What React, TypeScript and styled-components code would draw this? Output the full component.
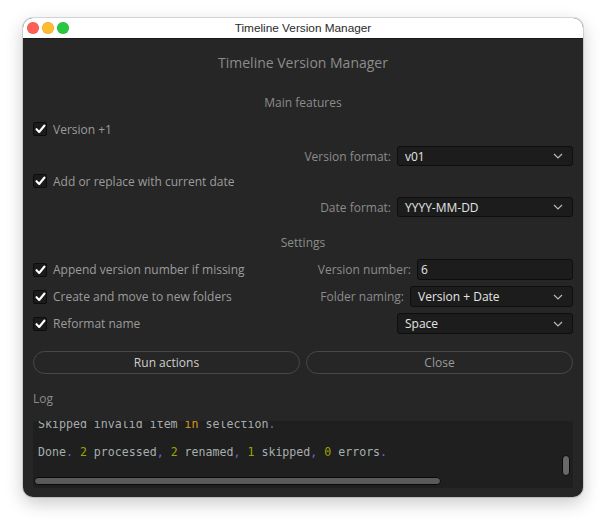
import styled, { createGlobalStyle } from "styled-components";

const GlobalStyle = createGlobalStyle`
	html, body {
		margin: 0;
		padding: 0;
		background: #ffffff;
	}
	body {
		font-family: "Open Sans", "Noto Sans", sans-serif;
	}
`;

const Page = styled.div`
	width: 606px;
	height: 525px;
	padding: 18px 0 0 23px;
	box-sizing: border-box;
`;

const Window = styled.div`
	width: 560px;
	height: 479px;
	border-radius: 10px;
	overflow: hidden;
	background: #262626;
	box-shadow: 0 0 0 1px rgba(0, 0, 0, 0.12), 0 6px 18px rgba(0, 0, 0, 0.22);
	display: flex;
	flex-direction: column;
`;

const TitleBar = styled.div`
	height: 20px;
	background: #ffffff;
	border-bottom: 1px solid #1a1a1a;
	display: flex;
	align-items: center;
	position: relative;
`;

const Lights = styled.div`
	display: flex;
	gap: 3px;
	padding-left: 4px;
	position: absolute;
	left: 0;
	top: 4px;
`;

const Light = styled.span<{ $color: string }>`
	width: 12px;
	height: 12px;
	border-radius: 50%;
	background: ${(p) => p.$color};
	box-shadow: inset 0 0 0 0.5px rgba(0, 0, 0, 0.15);
`;

const WindowTitle = styled.div`
	flex: 1;
	text-align: center;
	font-family: "Liberation Sans", Arial, sans-serif;
	font-size: 11.8px;
	color: #2a2a2a;
`;

const Body = styled.div`
	flex: 1;
	display: flex;
	flex-direction: column;
	padding: 14px 10px 9px;
`;

const Heading = styled.div`
	height: 20px;
	line-height: 20px;
	text-align: center;
	font-size: 14px;
	color: #8c8c8c;
`;

const SectionTitle = styled.div<{ $top: number }>`
	margin-top: ${(p) => p.$top}px;
	height: 20px;
	line-height: 20px;
	text-align: center;
	font-size: 12px;
	color: #8c8c8c;
`;

const Row = styled.div<{ $top: number; $h?: number }>`
	margin-top: ${(p) => p.$top}px;
	height: ${(p) => p.$h ?? 20}px;
	display: flex;
	align-items: center;
	justify-content: space-between;
`;

const Check = styled.label`
	display: flex;
	align-items: center;
	gap: 6px;
	font-size: 12px;
	color: #9c9c9c;
`;

const Box = styled.span`
	width: 14px;
	height: 14px;
	box-sizing: border-box;
	border: 1px solid #0c0c0c;
	border-radius: 2px;
	background: #1b1b1b;
	display: flex;
	align-items: center;
	justify-content: center;
`;

const Field = styled.div`
	margin-left: auto;
	display: flex;
	align-items: center;
	gap: 6px;
`;

const FieldLabel = styled.span`
	font-size: 12px;
	color: #8c8c8c;
`;

const Control = styled.div<{ $w: number; $h?: number; $pad?: number }>`
	width: ${(p) => p.$w}px;
	height: ${(p) => p.$h ?? 20}px;
	box-sizing: border-box;
	border: 1px solid #0e0e0e;
	border-radius: 3px;
	background: #1c1c1c;
	display: flex;
	align-items: center;
	justify-content: space-between;
	padding: 0 9px 0 ${(p) => p.$pad ?? 7}px;
	font-size: 12px;
	color: #e4e4e4;
`;

const Buttons = styled.div`
	margin-top: 17px;
	display: grid;
	grid-template-columns: 1fr 1fr;
	gap: 6px;
`;

const Button = styled.button<{ $dim?: boolean }>`
	height: 23px;
	border: 1px solid #484848;
	border-radius: 12px;
	background: #262626;
	font-family: "Open Sans", "Noto Sans", sans-serif;
	font-size: 12px;
	color: ${(p) => (p.$dim ? "#9a9a9a" : "#cfcfcf")};
	padding: 0;
`;

const LogLabel = styled.div`
	margin-top: 15px;
	height: 20px;
	line-height: 20px;
	font-size: 12px;
	color: #8c8c8c;
`;

const LogBox = styled.div`
	margin-top: 12px;
	height: 67px;
	border-radius: 3px;
	background: #1f1f1f;
	position: relative;
	overflow: hidden;
`;

const LogText = styled.div`
	margin-top: -11px;
	padding-left: 5px;
	font-family: "DejaVu Sans Mono", "Liberation Mono", monospace;
	font-size: 11.6px;
	line-height: 28px;
	color: #a7aeae;
	white-space: pre;
`;

const Num = styled.span`
	color: #9aa600;
`;

const Kw = styled.span`
	color: #d29a1c;
`;

const Punct = styled.span`
	color: #6a68d0;
`;

const HScroll = styled.div`
	position: absolute;
	left: 1px;
	bottom: 3px;
	width: 407px;
	height: 8px;
	box-sizing: border-box;
	border: 1px solid #0a0a0a;
	border-radius: 4px;
	background: #5a5a5a;
`;

const VScroll = styled.div`
	position: absolute;
	right: 3px;
	top: 34px;
	width: 8px;
	height: 21px;
	box-sizing: border-box;
	border: 1px solid #0a0a0a;
	border-radius: 4px;
	background: #686868;
`;

const CheckMark = () => (
	<svg width="11" height="10" viewBox="0 0 11 10">
		<path d="M1.5 5.2 L4.2 8 L9.5 1.5" fill="none" stroke="#ffffff" strokeWidth="2.1" strokeLinecap="round" strokeLinejoin="round" />
	</svg>
);

const Chevron = () => (
	<svg width="10" height="6" viewBox="0 0 10 6">
		<path d="M1 1 L5 5 L9 1" fill="none" stroke="#b8b8b8" strokeWidth="1.2" />
	</svg>
);

const CheckItem = ({ label }: { label: string }) => (
	<Check>
		<Box>
			<CheckMark />
		</Box>
		{label}
	</Check>
);

const Combo = ({ value, width, h }: { value: string; width: number; h?: number }) => (
	<Control $w={width} $h={h}>
		<span>{value}</span>
		<Chevron />
	</Control>
);

export default function App() {
	return (
		<Page>
			<GlobalStyle />
			<Window>
				<TitleBar>
					<Lights>
						<Light $color="#fe5f57" />
						<Light $color="#febc2e" />
						<Light $color="#28c840" />
					</Lights>
					<WindowTitle>Timeline Version Manager</WindowTitle>
				</TitleBar>
				<Body>
					<Heading>Timeline Version Manager</Heading>

					<SectionTitle $top={20}>Main features</SectionTitle>
					<Row $top={6}>
						<CheckItem label="Version +1" />
					</Row>
					<Row $top={7}>
						<Field>
							<FieldLabel>Version format:</FieldLabel>
							<Combo value="v01" width={176} />
						</Field>
					</Row>
					<Row $top={5}>
						<CheckItem label="Add or replace with current date" />
					</Row>
					<Row $top={6}>
						<Field>
							<FieldLabel>Date format:</FieldLabel>
							<Combo value="YYYY-MM-DD" width={176} />
						</Field>
					</Row>

					<SectionTitle $top={16}>Settings</SectionTitle>
					<Row $top={6} $h={21}>
						<CheckItem label="Append version number if missing" />
						<Field>
							<FieldLabel>Version number:</FieldLabel>
							<Control $w={156} $h={21} $pad={3}>
								<span>6</span>
							</Control>
						</Field>
					</Row>
					<Row $top={6} $h={21}>
						<CheckItem label="Create and move to new folders" />
						<Field>
							<FieldLabel>Folder naming:</FieldLabel>
							<Combo value="Version + Date" width={163} h={21} />
						</Field>
					</Row>
					<Row $top={6} $h={21}>
						<CheckItem label="Reformat name" />
						<Field>
							<Combo value="Space" width={176} h={21} />
						</Field>
					</Row>

					<Buttons>
						<Button>Run actions</Button>
						<Button $dim>Close</Button>
					</Buttons>

					<LogLabel>Log</LogLabel>
					<LogBox>
						<LogText>
							<div>
								Skipped invalid item <Kw>in</Kw> selection<Punct>.</Punct>
							</div>
							<div>
								Done<Punct>.</Punct> <Num>2</Num> processed<Punct>,</Punct> <Num>2</Num> renamed
								<Punct>,</Punct> <Num>1</Num> skipped<Punct>,</Punct> <Num>0</Num> errors<Punct>.</Punct>
							</div>
						</LogText>
						<HScroll />
						<VScroll />
					</LogBox>
				</Body>
			</Window>
		</Page>
	);
}
